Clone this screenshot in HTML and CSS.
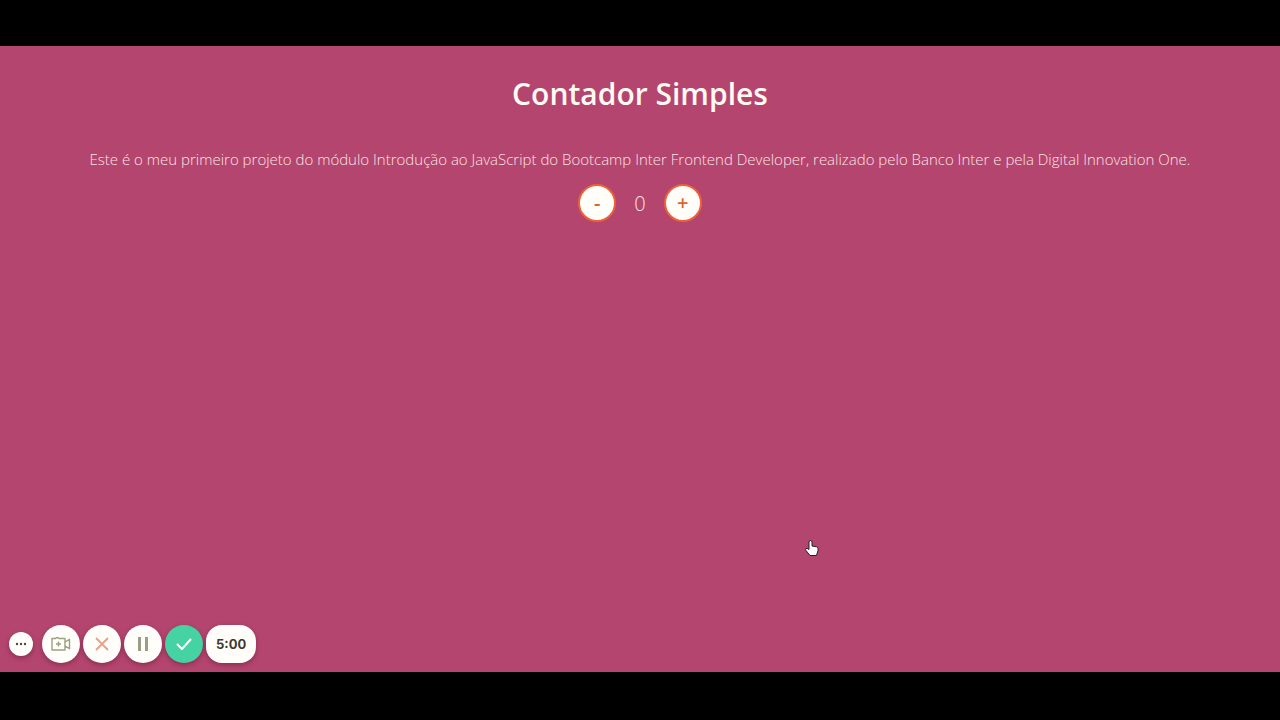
FILE: index.html
```html
<!DOCTYPE html>
<html lang="pt-BR">
<head>
<meta charset="utf-8">
<title>Contador Simples</title>
<link rel="stylesheet" href="styles.css">
</head>
<body>
<div class="page">
  <main class="counter">
    <h1 class="title">Contador Simples</h1>
    <p class="intro">Este é o meu primeiro projeto do módulo Introdução ao JavaScript do Bootcamp Inter Frontend Developer, realizado pelo Banco Inter e pela Digital Innovation One.</p>
    <div class="controls">
      <button class="step" type="button" aria-label="Diminuir">-</button>
      <output class="value">0</output>
      <button class="step" type="button" aria-label="Aumentar">+</button>
    </div>
  </main>
  <div class="recorder">
    <button class="tool tool-small" type="button" aria-label="Mais opções">
      <svg width="12" height="4" viewBox="0 0 12 4" fill="#4a4a42"><circle cx="2" cy="2" r="1.200"/><circle cx="6" cy="2" r="1.200"/><circle cx="10" cy="2" r="1.200"/></svg>
    </button>
    <button class="tool" type="button" aria-label="Câmera">
      <svg width="20" height="14" viewBox="0 0 20 14" fill="none" stroke="#99a37f" stroke-width="1.400" stroke-linejoin="round"><path d="M1 1.500h3.500l.8-.8h2l.8.8H14V5l4.500-2.700v9.400L14 9v4H1z"/><path d="M14 5v4M7.500 4.500v5M5 7h5"/></svg>
    </button>
    <button class="tool" type="button" aria-label="Cancelar">
      <svg width="14" height="14" viewBox="0 0 14 14" fill="none" stroke="#eb9f85" stroke-width="1.800"><path d="M1 1l12 12M13 1L1 13"/></svg>
    </button>
    <button class="tool" type="button" aria-label="Pausar">
      <svg width="10" height="16" viewBox="0 0 10 16" fill="#9a9e84"><path d="M0 1h3v14H0zM7 1h3v14H7z"/></svg>
    </button>
    <button class="tool tool-done" type="button" aria-label="Concluir">
      <svg width="16" height="12" viewBox="0 0 16 12" fill="none" stroke="#fff" stroke-width="2"><path d="M1 6l5 5L15 1"/></svg>
    </button>
    <time class="timer">5:00</time>
  </div>
  <svg class="pointer" width="14" height="16" viewBox="0 0 14 16" fill="#fff" stroke="#222" stroke-width="1"><path d="M4 9V2q0-1.500 1.500-1.500T7 2v4l4.500.8q1.500.3 1.500 1.700v2l-1.500 5H5l-4-5q-1-1.500 0-2t3 1z"/></svg>
</div>
</body>
</html>
```
FILE: styles.css
```css
* {
  box-sizing: border-box;
}

body {
  margin: 0;
  background: #000;
  font-family: "Open Sans", "Noto Sans", sans-serif;
}

.page {
  position: relative;
  display: flex;
  flex-direction: column;
  justify-content: space-between;
  min-height: calc(100vh - 94px);
  margin: 46px 0 48px;
  background: #b4456e;
  color: #fffaf2;
}

.counter {
  display: flex;
  flex-direction: column;
  align-items: center;
  padding: 26px 16px;
  text-align: center;
}

.title {
  margin: 0;
  font-size: 30px;
  font-weight: 600;
  line-height: 44px;
}

.intro {
  margin: 32px 0 14px;
  color: #fbe2e4;
  font-size: 15px;
  font-weight: 300;
  line-height: 22px;
}

.controls {
  display: flex;
  align-items: center;
  gap: 18px;
}

.step {
  width: 38px;
  height: 38px;
  padding: 0;
  border: 2px solid #ee6038;
  border-radius: 50%;
  background: #fffef9;
  color: #e0642e;
  font: 600 20px/34px "Open Sans", sans-serif;
}

.value {
  color: #fbe2e4;
  font-size: 20px;
  font-weight: 300;
}

.recorder {
  display: flex;
  align-items: center;
  gap: 3px;
  padding: 9px;
}

.tool {
  display: flex;
  align-items: center;
  justify-content: center;
  width: 38px;
  height: 38px;
  padding: 0;
  border: 0;
  border-radius: 50%;
  background: #fffefb;
  box-shadow: 0 2px 5px rgba(50, 10, 30, 0.35);
}

.tool-small {
  width: 24px;
  height: 24px;
  margin-right: 6px;
}

.tool-done {
  background: #46d3a4;
}

.timer {
  padding: 0 10px;
  border-radius: 16px;
  background: #fffefb;
  box-shadow: 0 2px 5px rgba(50, 10, 30, 0.35);
  color: #3f3a30;
  font: 700 13px/38px Inter, sans-serif;
}

.pointer {
  position: absolute;
  left: 805px;
  top: 494px;
}
```
